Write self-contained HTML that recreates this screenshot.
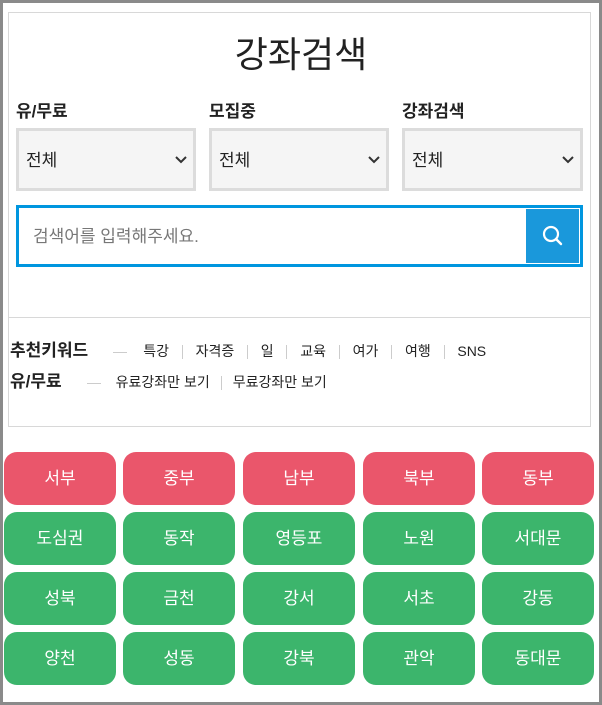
<!DOCTYPE html>
<html><head><meta charset="utf-8"><style>
*{box-sizing:border-box;margin:0;padding:0}
body{width:602px;height:705px;position:relative;background:#fff;font-family:"Liberation Sans","Noto Sans CJK KR",sans-serif;color:#222;overflow:hidden}
.outer{position:absolute;left:0;top:0;width:602px;height:705px;border:3px solid #8a8a8a;border-top-width:3px}
.box{position:absolute;left:8px;top:12px;width:583px;height:415px;border:1px solid #d8d8d8}
h1{position:absolute;left:0;width:602px;top:31px;text-align:center;font-size:36px;font-weight:400;line-height:48px;color:#222}
.lab{position:absolute;top:100px;font-size:17px;font-weight:700;line-height:24px}
.sel{position:absolute;top:128px;height:63px;border:3px solid #dcdcdc;background:#f5f5f5;font-size:17px;line-height:59px;padding-left:7px}
.sel svg{position:absolute;right:6px;top:25px}
.search{position:absolute;left:16px;top:205px;width:567px;height:62px;border:3px solid #0096df;background:#fff}
.search .ph{position:absolute;left:14px;top:1px;line-height:56px;font-size:17px;color:#777}
.search .btn{position:absolute;right:1px;top:1px;width:53px;height:54px;background:#1a98db}
.line{position:absolute;left:9px;width:581px;top:317px;height:1px;background:#d8d8d8}
.kw{position:absolute;font-size:14px;line-height:20px;color:#222;white-space:nowrap}
.kw b{font-size:17px}
.kw .dash{display:inline-block;width:14px;height:1px;background:#ccc;vertical-align:middle;margin:0 16px 0 25px}
.kw .sep{display:inline-block;width:1px;height:14px;background:#ccc;vertical-align:middle;margin:0 12.8px}
.b{position:absolute;width:112px;height:53px;border-radius:13px;color:#fff;font-size:17px;text-align:center;line-height:53px}
.r{background:#ea566b}.g{background:#3cb56c}
</style></head><body>
<div class="outer"></div>
<div class="box"></div>
<h1>강좌검색</h1>
<div class="lab" style="left:16px">유/무료</div>
<div class="lab" style="left:209px">모집중</div>
<div class="lab" style="left:402px">강좌검색</div>
<div class="sel" style="left:16px;width:180px">전체<svg width="12" height="8" viewBox="0 0 12 8"><path d="M1 1l5 5 5-5" fill="none" stroke="#333" stroke-width="2"/></svg></div>
<div class="sel" style="left:209px;width:180px">전체<svg width="12" height="8" viewBox="0 0 12 8"><path d="M1 1l5 5 5-5" fill="none" stroke="#333" stroke-width="2"/></svg></div>
<div class="sel" style="left:402px;width:181px">전체<svg width="12" height="8" viewBox="0 0 12 8"><path d="M1 1l5 5 5-5" fill="none" stroke="#333" stroke-width="2"/></svg></div>
<div class="search"><div class="ph">검색어를 입력해주세요.</div><div class="btn"><svg width="53" height="54" viewBox="0 0 53 54"><circle cx="25" cy="25" r="7" fill="none" stroke="#fff" stroke-width="2.2"/><path d="M30 30l5 5" stroke="#fff" stroke-width="2.4" stroke-linecap="round"/></svg></div></div>
<div class="line"></div>
<div class="kw" style="left:10px;top:341px"><b>추천키워드</b><span class="dash"></span>특강<span class="sep"></span>자격증<span class="sep"></span>일<span class="sep"></span>교육<span class="sep"></span>여가<span class="sep"></span>여행<span class="sep"></span>SNS</div>
<div class="kw" style="left:10px;top:372px"><b>유/무료</b><span class="dash" style="margin-left:25px;margin-right:15px"></span>유료강좌만 보기<span class="sep" style="margin:0 11px"></span>무료강좌만 보기</div>

<div class="b r" style="left:4px;top:452px">서부</div>
<div class="b r" style="left:123px;top:452px">중부</div>
<div class="b r" style="left:243px;top:452px">남부</div>
<div class="b r" style="left:363px;top:452px">북부</div>
<div class="b r" style="left:482px;top:452px">동부</div>
<div class="b g" style="left:4px;top:512px">도심권</div>
<div class="b g" style="left:123px;top:512px">동작</div>
<div class="b g" style="left:243px;top:512px">영등포</div>
<div class="b g" style="left:363px;top:512px">노원</div>
<div class="b g" style="left:482px;top:512px">서대문</div>
<div class="b g" style="left:4px;top:572px">성북</div>
<div class="b g" style="left:123px;top:572px">금천</div>
<div class="b g" style="left:243px;top:572px">강서</div>
<div class="b g" style="left:363px;top:572px">서초</div>
<div class="b g" style="left:482px;top:572px">강동</div>
<div class="b g" style="left:4px;top:632px">양천</div>
<div class="b g" style="left:123px;top:632px">성동</div>
<div class="b g" style="left:243px;top:632px">강북</div>
<div class="b g" style="left:363px;top:632px">관악</div>
<div class="b g" style="left:482px;top:632px">동대문</div>
</body></html>
